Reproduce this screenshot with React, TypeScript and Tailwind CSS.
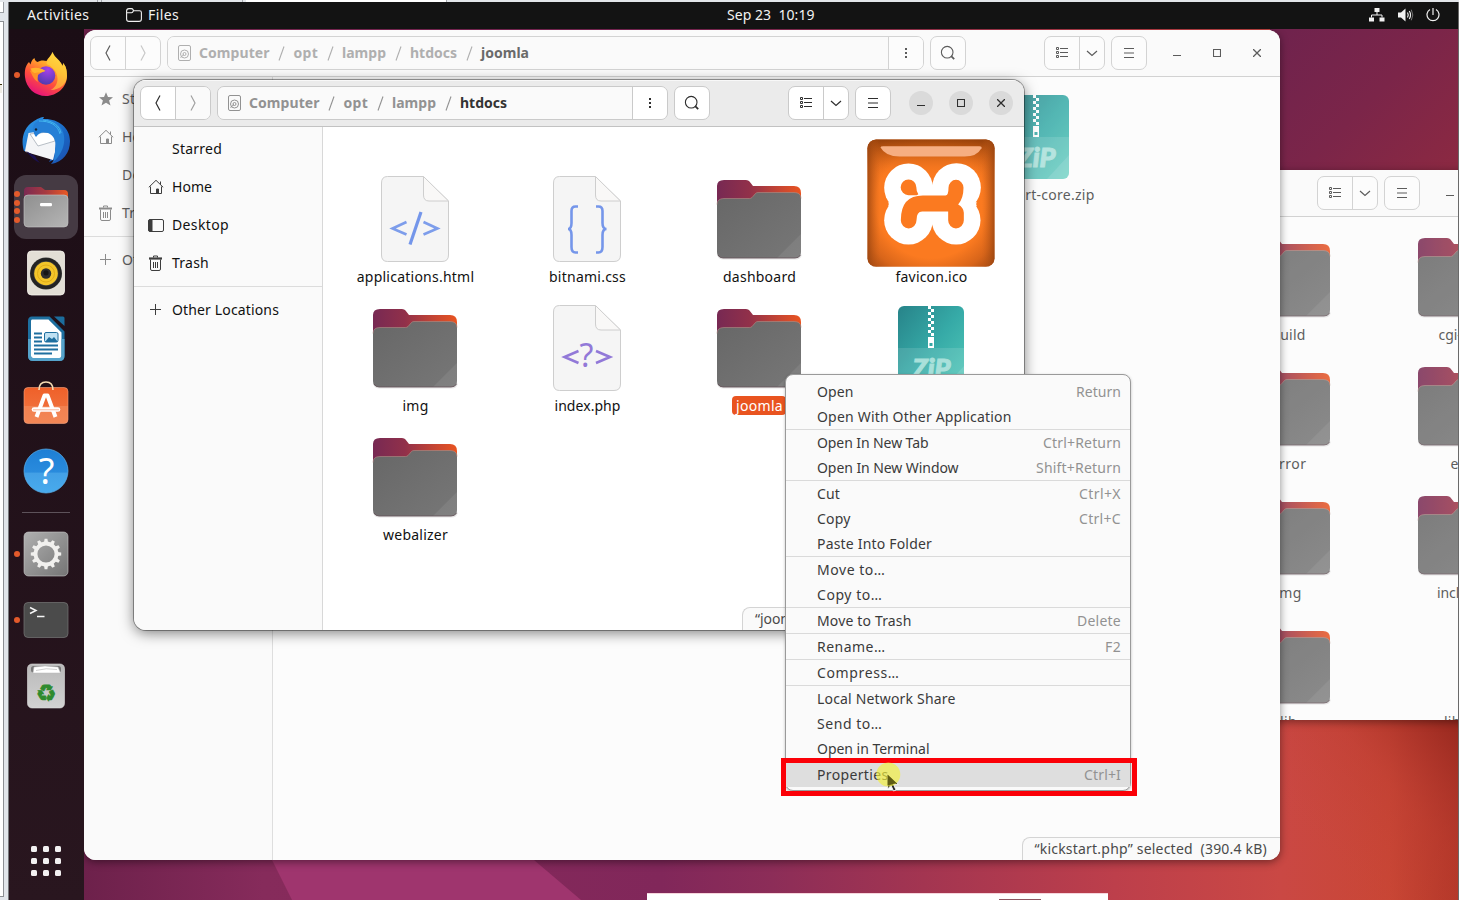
import { useLayoutEffect, useRef, type ReactNode } from "react";

/* Text run whose tracking is adjusted so that it occupies a given width. */
function T({ w, children, className = "" }: { w: number; children: string; className?: string }) {
  const ref = useRef<HTMLSpanElement>(null);
  useLayoutEffect(() => {
    const el = ref.current;
    if (!el) return;
    el.style.letterSpacing = "0px";
    const natural = el.getBoundingClientRect().width;
    el.style.letterSpacing = `${(w - natural) / children.length}px`;
  }, [w, children]);
  return (
    <span ref={ref} className={`inline-block whitespace-pre ${className}`}>
      {children}
    </span>
  );
}

/* ---------- small symbolic icons ---------- */

const Back = () => (
  <svg width="16" height="18" viewBox="0 0 16 18" fill="none" stroke="currentColor" strokeWidth="1.2">
    <path d="M10 1.5 6 9l4 7.5" />
  </svg>
);
const Forward = () => (
  <svg width="16" height="18" viewBox="0 0 16 18" fill="none" stroke="currentColor" strokeWidth="1.2">
    <path d="M6 1.5 10 9l-4 7.5" />
  </svg>
);
const Disk = () => (
  <svg width="13" height="16" viewBox="0 0 13 16" fill="none" stroke="currentColor">
    <rect x=".5" y=".5" width="12" height="15" rx="1.5" />
    <circle cx="6.5" cy="9" r="4" />
    <circle cx="6.5" cy="9" r="1.5" />
    <path d="M2.5 12.5 6 9.5" />
  </svg>
);
const Kebab = () => (
  <svg width="4" height="12" viewBox="0 0 4 12" fill="currentColor">
    <rect x="1" y="1" width="2" height="2" />
    <rect x="1" y="5" width="2" height="2" />
    <rect x="1" y="9" width="2" height="2" />
  </svg>
);
const Search = () => (
  <svg width="16" height="16" viewBox="0 0 16 16" fill="none" stroke="currentColor" strokeWidth="1.1">
    <circle cx="7.2" cy="7.2" r="5.8" />
    <path d="m11.2 11.2 3 3" strokeWidth="1.8" />
  </svg>
);
const ListView = () => (
  <svg width="14" height="12" viewBox="0 0 14 12" fill="none" stroke="currentColor">
    <path d="M1.500 .5h2v2h-2zM1.500 4.500h2v2h-2zM1.500 8.500h2v2h-2z" />
    <path d="M5 1.500h8M5 5.500h8M5 9.500h8" />
  </svg>
);
const Chevron = () => (
  <svg width="12" height="7" viewBox="0 0 12 7" fill="none" stroke="currentColor" strokeWidth="1.2">
    <path d="m1 1 5 4.5L11 1" />
  </svg>
);
const Burger = () => (
  <svg width="10" height="11" viewBox="0 0 10 11" fill="none" stroke="currentColor">
    <path d="M0 .5h10M0 5h10M0 9.500h10" />
  </svg>
);
const Star = () => (
  <svg width="16" height="16" viewBox="0 0 16 16" fill="currentColor">
    <path d="m8 1.2 2 4.8 5 .3-3.900 3.200 1.400 5L8 11.700l-4.500 2.800 1.400-5L1 6.300 6 6z" />
  </svg>
);
const Home = () => (
  <svg width="16" height="16" viewBox="0 0 16 16" fill="none" stroke="currentColor">
    <path d="M.8 8.300 8 1.300l7.200 7M2.500 7.500v7h11v-7M12.500 2.500v3" />
    <path d="M8.500 10h2v4.500h-2z" fill="currentColor" />
  </svg>
);
const Desktop = () => (
  <svg width="16" height="16" viewBox="0 0 16 16" fill="none" stroke="currentColor">
    <rect x=".5" y="2.500" width="15" height="12" rx="1.500" />
    <path d="M1 3h3v11H1z" fill="currentColor" />
  </svg>
);
const Trash = () => (
  <svg width="16" height="16" viewBox="0 0 16 16" fill="none" stroke="currentColor">
    <path d="M2.500 4.500v9.500q0 1.500 1.500 1.500h7q1.500 0 1.500-1.500V4.500M5.500 7v6M7.500 7v6M9.500 7v6" />
    <path d="M1 3.500h13" strokeWidth="2.200" />
    <path d="M5.500 2.500V1h4v1.500" />
  </svg>
);
const Plus = () => (
  <svg width="16" height="16" viewBox="0 0 16 16" fill="none" stroke="currentColor">
    <path d="M2 7.500h11M7.500 2v11" />
  </svg>
);
const Blank = () => <span className="w-4" />;

/* ---------- file icons ---------- */

function FolderIcon() {
  return (
    <svg width="96" height="96" viewBox="0 0 96 96">
      <defs>
        <linearGradient id="fb" x1="0" y1="0" x2="1" y2="0">
          <stop offset="0" stopColor="#772953" />
          <stop offset=".38" stopColor="#91304a" />
          <stop offset=".75" stopColor="#c84632" />
          <stop offset="1" stopColor="#e95420" />
        </linearGradient>
        <linearGradient id="ff" x1="0" y1="0" x2="1" y2="1">
          <stop offset="0" stopColor="#676767" />
          <stop offset="1" stopColor="#777" />
        </linearGradient>
      </defs>
      <rect x="6.500" y="80" width="84" height="8.500" rx="6" fill="#000" opacity=".1" />
      <path d="M6 15q0-6 7-6h22q2.500 0 3.500 1.500L42 15h41q7 0 7 7v30H6z" fill="url(#fb)" />
      <path d="M6 33.500q0-6 7-6h25.500q1.500 0 2.500-1l3.500-4q1-1 2.500-1h36q7 0 7 6V81q0 6-6 6H12q-6 0-6-6z" fill="url(#ff)" />
      <path d="M6 33.500q0-6 7-6h25.500q1.500 0 2.500-1l3.500-4q1-1 2.500-1h36q7 0 7 6" fill="none" stroke="#b08d84" strokeWidth=".6" />
      <path d="M90 63v18q0 6-6 6H66z" fill="#fff" opacity=".08" />
      <path d="M7 84q2 3 5 3h72q4 0 5.500-3" fill="none" stroke="#655058" strokeWidth=".8" />
    </svg>
  );
}

function DocIcon({ kind }: { kind: "html" | "css" | "php" }) {
  return (
    <svg width="96" height="96" viewBox="0 0 96 96" fill="none">
      <path d="M20.500 5.500H56L81.500 30v54q0 6.500-6.500 6.500H20.500q-6 0-6-6.500V12q0-6.500 6-6.500z" fill="#f5f5f5" stroke="#cecece" />
      <path d="M56.500 5.500 81.500 30H62q-5.500 0-5.500-6z" fill="#f9f8f7" stroke="#cecece" />
      {kind === "html" && (
        <g stroke="#7d9deb" strokeWidth="2.600">
          <path d="M39.500 51 25.500 57.500 39.500 63.500M56.500 51l14 6.500-14 6" />
          <path d="M54 41 43 73.500" stroke="#7496ea" strokeWidth="3.200" />
        </g>
      )}
      {kind === "css" && (
        <g stroke="#7596ea" strokeWidth="2.600">
          <path d="M39 35.500h-2.500q-4 0-4 4.500v12q0 6-3.500 6 3.500 0 3.500 6v12q0 5.500 4 5.500H39" />
          <path d="M57 35.500h2.500q4 0 4 4.500v12q0 6 4 6-4 0-4 6v12q0 5.500-4 5.500H57" />
        </g>
      )}
      {kind === "php" && (
        <>
          <path d="M39.500 51 25.500 57 39.500 63M57 51l14 6-14 6" stroke="#9279d8" strokeWidth="2.600" />
          <text x="47.500" y="67" textAnchor="middle" fontFamily="Noto Sans, sans-serif" fontSize="32" fill="#9279d8">?</text>
        </>
      )}
    </svg>
  );
}

function ZipIcon() {
  return (
    <svg width="96" height="96" viewBox="0 0 96 96">
      <defs>
        <linearGradient id="zg" x1="0" y1="0" x2="1" y2="1">
          <stop offset="0" stopColor="#278389" />
          <stop offset=".5" stopColor="#36aaa7" />
          <stop offset="1" stopColor="#52c9b9" />
        </linearGradient>
      </defs>
      <rect x="15" y="6" width="66" height="84" rx="6" fill="url(#zg)" />
      <path d="M15 48h66v36q0 6-6 6H21q-6 0-6-6z" fill="#fff" opacity=".12" />
      <path d="M81 66v18q0 6-6 6H59z" fill="#fff" opacity=".12" />
      {[0, 1, 2, 3, 4, 5, 6, 7, 8, 9].map((i) => (
        <rect key={i} x={i % 2 ? 48 : 45} y={6 + i * 3} width="3" height="3" fill="#fff" />
      ))}
      <path d="M45 37h6v11h-6zM46.500 43v3h3v-3z" fill="#fff" fillRule="evenodd" />
      <text x="29.500" y="78" textLength="38" lengthAdjust="spacingAndGlyphs" fontFamily="Lato, sans-serif" fontWeight="900" fontStyle="italic" fontSize="26" fill="#a9e0da" stroke="#a9e0da" strokeWidth="1">ZiP</text>
    </svg>
  );
}

function XamppIcon() {
  return (
    <svg width="128" height="128" viewBox="981.500 188.500 384 384">
      <defs>
        <radialGradient id="xg" cx=".5" cy=".5" r=".72">
          <stop offset=".6" stopColor="#fb7a20" />
          <stop offset=".8" stopColor="#d8651a" />
          <stop offset="1" stopColor="#9a4310" />
        </radialGradient>
        <linearGradient id="xt" x1="0" y1="0" x2="0" y2="1">
          <stop offset="0" stopColor="#8e3c08" stopOpacity=".85" />
          <stop offset=".14" stopColor="#bb5612" stopOpacity=".45" />
          <stop offset=".3" stopColor="#fb7a20" stopOpacity="0" />
        </linearGradient>
        <linearGradient id="xs" x1="0" y1="0" x2="1" y2="0">
          <stop offset="0" stopColor="#9a4510" stopOpacity=".8" />
          <stop offset=".1" stopColor="#c85f18" stopOpacity="0" />
          <stop offset=".9" stopColor="#c85f18" stopOpacity="0" />
          <stop offset="1" stopColor="#9a4510" stopOpacity=".8" />
        </linearGradient>
      </defs>
      <rect x="983" y="190" width="381" height="382" rx="26" fill="url(#xg)" />
      <rect x="983" y="190" width="381" height="382" rx="26" fill="url(#xt)" />
      <rect x="983" y="190" width="381" height="382" rx="26" fill="url(#xs)" />
      <path d="M1022 214q0-4 8-4h289q8 0 6 6-14 25-50 25h-196q-42 0-57-27z" fill="#f6ae82" />
      <g fill="#fff">
        <circle cx="1106" cy="335" r="73" />
        <circle cx="1250" cy="334" r="73" />
        <circle cx="1106" cy="432" r="73" />
        <circle cx="1249" cy="432" r="73" />
        <path d="M1045 378q4 5 0 12l60 5v-20zM1311 378q-4 5 0 12l-60 5v-20zM1100 325h155v120h-155z" />
      </g>
      <path d="M1131 357h-25a23.500 23.500 0 1 1 23.500-23.500q0 14 6 21z" fill="#fb7a20" />
      <path d="M1083 432q0-74 66-74h68q9 0 9-23a22.500 24 0 0 1 45 0q0 32-16 50 16 8 17 25v22a23.500 25 0 0 1-47 0v-26h-78q-17 0-17 26a23.500 25 0 0 1-47 0z" fill="#fb7a20" />
    </svg>
  );
}

/* ---------- window parts ---------- */

type Crumb = { label: string; w: number };

function HeaderBar({ crumbs, active }: { crumbs: Crumb[]; active: boolean }) {
  const btn = active ? "border-[#cacaca] bg-white" : "border-[#d3d3d3] bg-[#fcfcfc]";
  const line = active ? "border-[#cacaca]" : "border-[#d3d3d3]";
  const ctl = `flex h-6 w-6 items-center justify-center rounded-full ${active ? "bg-[#dadada]" : ""}`;
  return (
    <div
      className={`flex h-[47px] shrink-0 items-center border-b pr-[11px] pl-1.5 ${
        active ? "border-[#c2c2c2] bg-[#ebebeb] text-[#2e2e2e] shadow-[inset_0_1px_0_#f8f8f8]" : "border-[#d2d2d2] bg-[#fafafa] text-[#5c5c5c]"
      }`}
    >
      <div className={`flex h-[34px] w-[71px] overflow-hidden rounded-[7px] border ${btn}`}>
        <span className={`flex w-[35px] items-center justify-center border-r ${line}`}><Back /></span>
        <span className={`flex flex-1 items-center justify-center ${active ? "bg-[#fafafa] text-[#a0a0a0]" : "text-[#c8c8c8]"}`}><Forward /></span>
      </div>
      <div className={`ml-1.5 flex h-[34px] flex-1 overflow-hidden rounded-[7px] border ${line}`}>
        <div className={`flex flex-1 items-center bg-[#fafafa] pl-2.5 font-bold ${active ? "text-[#929292]" : "text-[#afafaf]"}`}>
          <Disk />
          <span className="w-2" />
          {crumbs.map((c, i) => (
            <span key={c.label} className="flex items-center">
              {i > 0 && (
                <span className="flex w-6 justify-center">
                  <svg width="7" height="15" viewBox="0 0 7 15" stroke="currentColor" strokeWidth="1.100"><path d="M1 14.500 6 .500" /></svg>
                </span>
              )}
              <T w={c.w} className={`pb-px ${i === crumbs.length - 1 ? (active ? "text-[#333]" : "text-[#6a6a6a]") : ""}`}>{c.label}</T>
            </span>
          ))}
        </div>
        <span className={`flex w-[35px] items-center justify-center border-l ${line} ${active ? "bg-white" : "bg-[#fcfcfc]"}`}><Kebab /></span>
      </div>
      <div className={`ml-1.5 flex h-[34px] w-9 items-center justify-center rounded-[7px] border ${btn}`}><Search /></div>
      <div className={`ml-[78px] flex h-[34px] w-[61px] rounded-[7px] border ${btn}`}>
        <span className={`flex w-[35px] items-center justify-center border-r ${line}`}><ListView /></span>
        <span className="flex flex-1 items-center justify-center"><Chevron /></span>
      </div>
      <div className={`ml-1.5 flex h-[34px] w-9 items-center justify-center rounded-[7px] border ${btn}`}><Burger /></div>
      <div className="ml-[18px] flex gap-4">
        <span className={ctl}><svg width="8" height="8" viewBox="0 0 8 8"><path d="M0 6.500h8" stroke="currentColor" /></svg></span>
        <span className={ctl}><svg width="8" height="8" viewBox="0 0 8 8"><path d="M.5 .5h7v7h-7z" fill="none" stroke="currentColor" strokeWidth="1.100" /></svg></span>
        <span className={ctl}><svg width="8" height="8" viewBox="0 0 8 8"><path d="m0 0 8 8M8 0 0 8" stroke="currentColor" strokeWidth="1.300" /></svg></span>
      </div>
    </div>
  );
}

function Sidebar({ active }: { active: boolean }) {
  const row = "flex h-[38px] items-center gap-2 pl-3.5";
  const ic = active ? "text-[#3d3d3d]" : "text-[#8b8b8b]";
  return (
    <div className={`flex w-[189px] shrink-0 flex-col border-r pt-[3px] ${active ? "border-[#d8d8d8] bg-[#fafafa] text-[#111]" : "border-[#dedede] bg-[#fafafa] text-[#5e5e5e]"}`}>
      <div className={row}><span className={ic}>{active ? <span className="block w-4" /> : <Star />}</span><T w={50} className="pb-px">Starred</T></div>
      <div className={row}><span className={ic}><Home /></span><T w={40} className="pb-px">Home</T></div>
      <div className={row}>{active ? <span className={ic}><Desktop /></span> : <Blank />}<T w={57} className="pb-px">Desktop</T></div>
      <div className={row}><span className={ic}><Trash /></span><T w={37} className="pb-px">Trash</T></div>
      <div className="my-1 h-px shrink-0 bg-[#dcdcdc]" />
      <div className={row}><span className={ic}><Plus /></span><T w={107} className="pb-px">Other Locations</T></div>
    </div>
  );
}

function Item({ icon, label, w, selected }: { icon?: ReactNode; label: string; w: number; selected?: boolean }) {
  return (
    <div className="flex w-[172px] flex-col items-center justify-end">
      {icon ?? <div className="h-24" />}
      {selected ? (
        <span className="flex h-[19px] w-[54px] items-center justify-center rounded bg-[#e95420] pl-px text-white"><T w={w}>{label}</T></span>
      ) : (
        <span className="flex h-[19px] items-center pl-px"><T w={w}>{label}</T></span>
      )}
    </div>
  );
}

function Status({ text, w }: { text: string; w: number }) {
  return (
    <div className="absolute right-0 bottom-0 flex h-[23px] items-center rounded-tl-lg border-t border-l border-[#d4d4d4] bg-[#fafafa] px-3 pr-[13px] text-[#4a4a4a]">
      <T w={w} className="pb-px">{text}</T>
    </div>
  );
}

/* ---------- dock icons ---------- */

const Firefox = () => (
  <svg width="48" height="48" viewBox="0 0 48 48">
    <defs>
      <linearGradient id="fx" x1=".8" y1="0" x2=".3" y2="1">
        <stop offset="0" stopColor="#ffe14a" /><stop offset=".35" stopColor="#ffa32b" /><stop offset=".65" stopColor="#ff4f3c" /><stop offset="1" stopColor="#e4107e" />
      </linearGradient>
      <radialGradient id="fp" cx=".6" cy=".2" r=".9"><stop offset="0" stopColor="#a640ea" /><stop offset="1" stopColor="#453ba8" /></radialGradient>
    </defs>
    <path d="M30.500 1c-1 3.500-4.500 6-6 9-3-1-7-.5-9 1-2-1-3-2.500-3-4-2.500 1.500-3.500 4-4 6.500L7 11C3 15 2.500 20 3 26c1 11 10 19 21 19s21-9 21-20c0-6-1-10-4-13 0 1 0 2-.5 3-2-6-8-8-10-14z" fill="url(#fx)" />
    <path d="M30.500 1c-2 5-6 8-6 12 5 2 11 7 11 15 0 5-3 9-7 11 10 0 16.500-7 16.500-14 0-6-1-10-4-13 0 1 0 2-.5 3-2-6-8-8-10-14z" fill="#ffd83d" opacity=".6" />
    <circle cx="24" cy="24.500" r="9.300" fill="url(#fp)" />
    <path d="M8 20c5-3 11-3 15 0-3 1-5 2-7 4 0 2-1 4 0 7-5-3-6-8-8-11z" fill="#ff9128" />
    <path d="M8.500 17.500c5-1.500 10-1 15 2.500-4 2-8 1-10 2-3 0-4-2.500-5-4.500z" fill="#ffb42c" />
  </svg>
);
const Thunderbird = () => (
  <svg width="48" height="48" viewBox="0 0 48 48">
    <defs>
      <linearGradient id="tb" x1="0" y1="0" x2="1" y2="1"><stop offset="0" stopColor="#2f9bea" /><stop offset=".6" stopColor="#1967c4" /><stop offset="1" stopColor="#1d4fae" /></linearGradient>
    </defs>
    <path d="M12 4C17 1 19 0 22 0l-1 2c14-1 27 8 27 22 0 12-7 21-19 23l4-5-6 3 3-6L2 34C-1 25 0 11 12 4z" fill="url(#tb)" />
    <path d="M3 34 6.500 16l20-3 7.500 10-1 12-2 8L4 35z" fill="#f4f5f7" />
    <path d="M8 17 16 29l17-5-1-5-6-4z" fill="#fff" stroke="#9aa3ae" strokeWidth=".7" />
    <path d="M4 34q7 9 14 12-4-4-5-7z" fill="#1a1050" />
    <path d="M13 6C21 1 36 2 41 15c4 11-2 24-10 30 2-5 2-8 2-12 2-8-1-15-7-17-6-1-8-1-12 4-3-4-4-10-1-14z" fill="#257fd6" />
    <path d="M17 4c11 0 19 4 21 13M21 3c10 1 17 6 18 13" stroke="#43b6f0" strokeWidth="1" fill="none" />
    <circle cx="14" cy="12.500" r="1.200" fill="#123" />
  </svg>
);
const FilesApp = () => (
  <svg width="48" height="48" viewBox="0 0 48 48">
    <defs>
      <linearGradient id="fa" x1="0" y1="0" x2="1" y2="0"><stop offset="0" stopColor="#7b2a52" /><stop offset=".5" stopColor="#a83a40" /><stop offset="1" stopColor="#ea5a24" /></linearGradient>
      <linearGradient id="fc" x1="0" y1="0" x2="1" y2="1"><stop offset="0" stopColor="#8f8f8f" /><stop offset="1" stopColor="#b5b5b5" /></linearGradient>
    </defs>
    <path d="M2 8q0-4 4-4h13l4 3h19q4 0 4 4v12H2z" fill="url(#fa)" />
    <rect x="2" y="12" width="44" height="32" rx="4" fill="url(#fc)" stroke="#c6c6c6" strokeWidth=".6" />
    <rect x="18" y="20" width="12" height="3.300" rx="1.200" fill="#fff" />
  </svg>
);
const Rhythmbox = () => (
  <svg width="48" height="48" viewBox="0 0 48 48">
    <rect x="5.500" y="2" width="37" height="44" rx="4" fill="#e3dfd6" stroke="#f6f4ee" strokeWidth=".8" />
    <circle cx="24" cy="24.500" r="16" fill="#3d3d3d" />
    <circle cx="24" cy="24.500" r="14" fill="none" stroke="#232323" strokeWidth="3" />
    <circle cx="24" cy="24.500" r="11.800" fill="#f3c52a" />
    <circle cx="24" cy="24.500" r="8.500" fill="none" stroke="#e0ad17" />
    <circle cx="24" cy="24.500" r="5.200" fill="#2e2e2e" />
    <circle cx="24" cy="23.800" r="2.600" fill="#161616" />
  </svg>
);
const Writer = () => (
  <svg width="48" height="48" viewBox="0 0 48 48">
    <path d="M10 3h17l14 14v24q0 3.500-3.500 3.500H11q-3.500 0-3.500-3.500V6q0-3 2.500-3z" fill="#fff" stroke="#1d6f9f" strokeWidth="3" />
    <path d="M7.500 24v17q0 3.500 3.500 3.500h26.500q3.500 0 3.500-3.500V24" fill="none" stroke="#55a3cb" strokeWidth="3" />
    <path d="M32 1.500h9q1.500 0 1.500 1.500v8z" fill="#1c6d9d" />
    <path d="M12 18.500h8M12 22.500h8M12 26.500h8M12 30.500h24M12 34.500h24M12 38.500h18" stroke="#1f6f9f" strokeWidth="2" />
    <rect x="22.500" y="17.500" width="13.500" height="9.500" rx="1.500" fill="#bfe1f3" stroke="#1f6f9f" />
    <path d="m23 27 4-5 3 2 2-2 4 5z" fill="#1f6f9f" />
  </svg>
);
const Software = () => (
  <svg width="48" height="48" viewBox="0 0 48 48">
    <defs><linearGradient id="sw" x1="0" y1="0" x2="0" y2="1"><stop offset="0" stopColor="#ef6029" /><stop offset=".5" stopColor="#f06d38" /><stop offset=".51" stopColor="#f28150" /><stop offset="1" stopColor="#f28756" /></linearGradient></defs>
    <rect x="2" y="6.500" width="44" height="36" rx="4" fill="url(#sw)" stroke="#f7a27e" strokeWidth=".6" />
    <path d="M17 9q0-8 7-8t7 8" fill="none" stroke="#f6dcb4" strokeWidth="1.600" />
    <path d="M14.500 36 22.500 14.500h3L33.500 36" fill="none" stroke="#fff" strokeWidth="4" strokeLinejoin="round" />
    <path d="M12 28.500h24" stroke="#fff" strokeWidth="4.600" strokeLinecap="round" />
    <path d="M11 28.800h26" stroke="#f6b193" strokeWidth=".9" />
  </svg>
);
const Help = () => (
  <svg width="48" height="48" viewBox="0 0 48 48">
    <defs><linearGradient id="hp" x1="0" y1="0" x2="0" y2="1"><stop offset="0" stopColor="#1e7fd5" /><stop offset=".53" stopColor="#298bdd" /><stop offset=".54" stopColor="#43a0e6" /><stop offset="1" stopColor="#48abed" /></linearGradient></defs>
    <circle cx="24" cy="24" r="22" fill="url(#hp)" stroke="#5ab2ee" strokeWidth=".7" />
    <text x="24.500" y="37" textAnchor="middle" fontFamily="Noto Sans, sans-serif" fontSize="36" fill="#fff">?</text>
  </svg>
);
const Settings = () => (
  <svg width="48" height="48" viewBox="0 0 48 48">
    <defs><linearGradient id="st" x1="0" y1="0" x2="1" y2="1"><stop offset="0" stopColor="#b0b0b0" /><stop offset="1" stopColor="#757575" /></linearGradient></defs>
    <rect x="2" y="2" width="44" height="44" rx="4.500" fill="url(#st)" stroke="#c9c9c9" strokeWidth=".6" />
    <circle cx="24" cy="24" r="10.500" fill="none" stroke="#f1f0ee" strokeWidth="3.800" />
    {[0, 30, 60, 90, 120, 150, 180, 210, 240, 270, 300, 330].map((a) => (
      <path key={a} d="m22 12.500.600-3.700h2.800l.600 3.700z" fill="#f1f0ee" transform={`rotate(${a} 24 24)`} />
    ))}
  </svg>
);
const Terminal = () => (
  <svg width="48" height="48" viewBox="0 0 48 48">
    <rect x="2" y="6.500" width="44" height="35" rx="4" fill="#4b4b4b" stroke="#777" strokeWidth=".7" />
    <path d="m8 11.500 6 3-6 3M15 20.500h7.500" fill="none" stroke="#f5f5f5" strokeWidth="1.500" />
  </svg>
);
const TrashApp = () => (
  <svg width="48" height="48" viewBox="0 0 48 48">
    <defs><linearGradient id="tr" x1="0" y1="0" x2="0" y2="1"><stop offset="0" stopColor="#b9b9b9" /><stop offset="1" stopColor="#d2d2d2" /></linearGradient></defs>
    <rect x="5.500" y="2" width="37" height="44" rx="4.500" fill="url(#tr)" stroke="#dedede" strokeWidth=".6" />
    <rect x="9" y="4" width="30" height="6.500" rx="2.500" fill="#777" />
    <path d="m11 11 1-6 11-1 13 1 2.500 6z" fill="#fff" stroke="#bbb" strokeWidth=".5" />
    <path d="M14 8.500q10-3 21-1" fill="none" stroke="#bbb" strokeWidth=".7" />
    <text x="24" y="38.500" textAnchor="middle" fontFamily="DejaVu Sans, sans-serif" fontSize="23" fill="#2e8b2e" stroke="#2e8b2e" strokeWidth=".8">♻</text>
  </svg>
);

function DockItem({ icon, dots = 0, active }: { icon: ReactNode; dots?: number; active?: boolean }) {
  return (
    <div className={`relative flex h-16 w-16 items-center justify-center rounded-[12px] ${active ? "bg-[#453a43]" : ""}`}>
      {icon}
      {dots > 0 && (
        <div className="absolute inset-y-0 left-0 flex flex-col justify-center gap-[2.700px]">
          {Array.from({ length: dots }, (_, i) => (
            <span key={i} className="h-1.5 w-1.5 rounded-full bg-[#e35a2b]" />
          ))}
        </div>
      )}
    </div>
  );
}

/* ---------- context menu ---------- */

type Entry = [label: string, w: number, key?: string, keyW?: number];
const MENU: Entry[][] = [
  [["Open", 36.5, "Return", 45], ["Open With Other Application", 194.5]],
  [["Open In New Tab", 111.5, "Ctrl+Return", 78], ["Open In New Window", 141.5, "Shift+Return", 85]],
  [["Cut", 23, "Ctrl+X", 42], ["Copy", 33.5, "Ctrl+C", 42], ["Paste Into Folder", 115]],
  [["Move to…", 68.5], ["Copy to…", 65.5]],
  [["Move to Trash", 94.5, "Delete", 44]],
  [["Rename…", 68.5, "F2", 16]],
  [["Compress…", 82.5]],
  [["Local Network Share", 138.5], ["Send to…", 65.5], ["Open in Terminal", 112.5]],
  [["Properties", 71.5, "Ctrl+I", 37]],
];

function ContextMenu() {
  return (
    <div className="absolute top-[374px] left-[785px] w-[346px] rounded-lg border border-[#9a9a9a] bg-[#fafafa] pt-1 pb-[3px] text-[#3a3a3a] shadow-[0_1px_3px_rgba(0,0,0,0.25)]">
      {MENU.map((group, g) => (
        <div key={g} className={g > 0 ? "border-t border-[#dadada]" : ""}>
          {group.map(([label, w, key, keyW]) => (
            <div key={label} className={`flex h-[25px] items-center justify-between pr-[9px] pl-[31px] ${label === "Properties" ? "bg-[#dedede]" : ""}`}>
              <T w={w}>{label}</T>
              {key && <T w={keyW ?? 40} className="text-[#929292]">{key}</T>}
            </div>
          ))}
        </div>
      ))}
    </div>
  );
}

/* ---------- desktop ---------- */

function Wallpaper() {
  return (
    <svg className="absolute inset-0" width="1459" height="900" viewBox="0 0 1459 900">
      <defs>
        <linearGradient id="w1" gradientUnits="userSpaceOnUse" x1="84" y1="0" x2="1459" y2="0">
          <stop offset="0" stopColor="#6d214b" /><stop offset=".13" stopColor="#862b5b" /><stop offset=".42" stopColor="#81275a" />
          <stop offset=".5" stopColor="#8c2d58" /><stop offset=".61" stopColor="#a33551" /><stop offset=".75" stopColor="#bd3f4b" />
          <stop offset=".87" stopColor="#ca4844" /><stop offset=".95" stopColor="#c94634" /><stop offset="1" stopColor="#b23625" />
        </linearGradient>
        <linearGradient id="w2" gradientUnits="userSpaceOnUse" x1="1290" y1="30" x2="1440" y2="180">
          <stop offset="0" stopColor="#70234d" /><stop offset=".5" stopColor="#7b2549" /><stop offset="1" stopColor="#8b2942" />
        </linearGradient>
        <linearGradient id="w3" gradientUnits="userSpaceOnUse" x1="1300" y1="860" x2="1459" y2="720">
          <stop offset="0" stopColor="#cc4a40" stopOpacity="0" /><stop offset=".55" stopColor="#b93b33" stopOpacity=".35" /><stop offset="1" stopColor="#97281e" />
        </linearGradient>
      </defs>
      <rect width="1459" height="900" fill="url(#w1)" />
      <path d="M272 860h262l47 40H292z" fill="#9f356e" />
      <rect x="1270" y="29" width="189" height="150" fill="url(#w2)" />
      <rect x="1270" y="715" width="189" height="185" fill="url(#w3)" />
    </svg>
  );
}

export default function App() {
  return (
    <div className="relative h-[900px] w-[1459px] overflow-hidden bg-[#e3e6ea] font-['Noto_Sans',sans-serif] text-[14px] leading-[19px]">
      <Wallpaper />

      {/* third window, mostly behind the others */}
      <div className="absolute top-[170px] left-[663px] flex h-[550px] w-[890px] flex-col overflow-hidden rounded-xl bg-[#fcfcfc] shadow-[0_2px_8px_rgba(0,0,0,0.4)]">
        <HeaderBar active={false} crumbs={[{ label: "lampp", w: 44 }]} />
        <div className="flex min-h-0 flex-1">
          <div className="w-[189px] shrink-0 border-r border-[#dedede]" />
          <div className="ml-1.5 flex flex-col gap-3.5 pt-3 pl-[344px] text-[#5e5e5e]">
            {([["build", 34, "cgi-bin", 44], ["error", 36, "etc", 20], ["img", 26, "include", 47], ["lib", 17, "lib64", 33]] as const).map(([a, aw, b, bw], i) => (
              <div key={a} className="flex">
                <Item icon={<div className="opacity-85"><FolderIcon /></div>} label={a} w={aw} />
                <Item icon={i < 3 ? <div className="opacity-85"><FolderIcon /></div> : undefined} label={b} w={bw} />
              </div>
            ))}
          </div>
        </div>
      </div>

      {/* joomla window */}
      <div className="absolute top-[30px] left-[84px] flex h-[830px] w-[1196px] flex-col overflow-hidden rounded-xl bg-[#fcfcfc] shadow-[0_2px_8px_rgba(0,0,0,0.45)]">
        <HeaderBar
          active={false}
          crumbs={[{ label: "Computer", w: 70.5 }, { label: "opt", w: 24.5 }, { label: "lampp", w: 44 }, { label: "htdocs", w: 47 }, { label: "joomla", w: 48 }]}
        />
        <div className="flex min-h-0 flex-1">
          <Sidebar active={false} />
          <div className="flex flex-1 items-start pt-3 pl-[677px] text-[#5e5e5e]">
            <Item icon={<div className="opacity-85"><ZipIcon /></div>} label="kickstart-core.zip" w={116} />
          </div>
        </div>
        <Status text="“kickstart.php” selected  (390.4 kB)" w={232.5} />
      </div>

      {/* top bar */}
      <div className="absolute top-0 left-0 flex h-[2px] w-full bg-[#e3e6ea]">
        <span className="ml-[97px] w-px bg-[#a5a8ad]" />
        <span className="ml-[3px] w-px bg-[#a5a8ad]" />
        <span className="ml-[140px] w-px bg-[#a5a8ad]" />
        <span className="ml-[3px] w-[201px] border-r border-[#a5a8ad] bg-white" />
      </div>
      <div className="absolute top-[2px] left-[9px] flex h-[27px] w-[1449px] items-center bg-[#131313] pb-0.5 text-[#f2f2f2]">
        <div className="flex w-[718px] items-center pl-[18px]">
          <T w={62.5}>Activities</T>
          <svg className="mr-1.5 ml-[36.500px]" width="16" height="14" viewBox="0 0 16 14" fill="none" stroke="currentColor" strokeWidth="1.100">
            <path d="M.6 11V3Q.6.600 3 .600h2.500q1 0 1.500 1l.500 1.100h6q1.900 0 1.900 1.900V11q0 2.400-2.400 2.400H3Q.6 13.400.6 11zM.6 4.700h5q1 0 1.900-2" />
          </svg>
          <T w={31}>Files</T>
        </div>
        <T w={87.5}>Sep 23  10:19</T>
        <div className="mr-[18px] ml-auto flex items-center gap-[12.500px]">
          <svg width="16" height="14" viewBox="0 0 16 14" fill="currentColor">
            <path d="M5.500 0h5v4h-5zM0 9.500h5v4H0zM10.500 9.500h5v4h-5z" />
            <path d="M8 4v3M2.500 9.500V7h10.500v2.500" fill="none" stroke="currentColor" />
          </svg>
          <svg width="16" height="14" viewBox="0 0 16 14" fill="currentColor">
            <path d="M0 4.500h3L7.500.500v13L3 9.500H0z" />
            <path d="M9.500 4.500q1.500 2.500 0 5M11.300 3q2.500 4 0 8" fill="none" stroke="currentColor" strokeWidth="1.200" />
            <path d="M13.300 1.700q3 5.300 0 10.600" fill="none" stroke="#777" />
          </svg>
          <svg width="14" height="14" viewBox="0 0 14 14" fill="none" stroke="currentColor" strokeWidth="1.200">
            <path d="M7 0v7M4 1.500a6 6 0 1 0 6 0" />
          </svg>
        </div>
      </div>

      {/* dock */}
      <div className="absolute top-[29px] left-[9px] flex h-[871px] w-[75px] flex-col items-center bg-linear-to-b from-[#1b0d15] to-[#29161f] pt-3.5 pr-px">
        <div className="flex flex-col gap-0.5">
          <DockItem icon={<Firefox />} dots={1} />
          <DockItem icon={<Thunderbird />} />
          <DockItem icon={<FilesApp />} dots={4} active />
          <DockItem icon={<Rhythmbox />} />
          <DockItem icon={<Writer />} />
          <DockItem icon={<Software />} />
          <DockItem icon={<Help />} />
        </div>
        <div className="mt-[9px] mb-[9px] h-px w-12 shrink-0 bg-[#5d525a]" />
        <div className="flex flex-col gap-0.5">
          <DockItem icon={<Settings />} dots={1} />
          <DockItem icon={<Terminal />} dots={1} />
          <DockItem icon={<TrashApp />} />
        </div>
        <div className="mt-auto mb-6 grid grid-cols-3 gap-1.5">
          {Array.from({ length: 9 }, (_, i) => (
            <span key={i} className="h-1.5 w-1.5 rounded-[1.500px] bg-[#f2f0f1]" />
          ))}
        </div>
      </div>

      {/* htdocs window */}
      <div className="absolute top-[80px] left-[134px] flex h-[550px] w-[890px] flex-col overflow-hidden rounded-xl bg-white shadow-[0_0_0_1px_rgba(0,0,0,0.35),0_3px_14px_rgba(0,0,0,0.5)]">
        <HeaderBar active crumbs={[{ label: "Computer", w: 70.5 }, { label: "opt", w: 24.5 }, { label: "lampp", w: 44 }, { label: "htdocs", w: 47 }]} />
        <div className="flex min-h-0 flex-1">
          <Sidebar active />
          <div className="flex flex-col gap-3.5 pt-3 pl-1.5 text-[#111]">
            <div className="flex">
              <Item icon={<DocIcon kind="html" />} label="applications.html" w={117.5} />
              <Item icon={<DocIcon kind="css" />} label="bitnami.css" w={77} />
              <Item icon={<FolderIcon />} label="dashboard" w={73} />
              <Item icon={<XamppIcon />} label="favicon.ico" w={72} />
            </div>
            <div className="flex">
              <Item icon={<FolderIcon />} label="img" w={26} />
              <Item icon={<DocIcon kind="php" />} label="index.php" w={66} />
              <Item icon={<FolderIcon />} label="joomla" w={47} selected />
              <Item icon={<ZipIcon />} label="joomla.zip" w={68} />
            </div>
            <div className="flex">
              <Item icon={<FolderIcon />} label="webalizer" w={65} />
            </div>
          </div>
        </div>
        <Status text="“joomla” selected  (containing 27 items)" w={256} />
      </div>

      <ContextMenu />

      {/* highlight frame and pointer */}
      <div className="absolute top-[758px] left-[781px] h-[38px] w-[356px] border-[5px] border-[#fb0007]" />
      <svg className="absolute top-[760px] left-[874px]" width="30" height="32" viewBox="0 0 30 32">
        <path d="M13.500 14v15l3.500-3.500 2.500 5.500 2.500-1-2.500-5.500h5z" fill="#262626" stroke="#f4f4f4" strokeWidth=".9" />
        <circle cx="14.300" cy="14.500" r="12" fill="#f3f03a" fillOpacity=".66" />
        <path d="M13.500 14.500v11l9-2.500z" fill="#5f5c14" />
      </svg>

      {/* host window edges */}
      <div className="absolute top-[2px] left-0 flex h-[898px] w-[9px] flex-col border-r border-[#77797d] bg-[#e1e5ea]">
        <div className="h-[11px] w-1 border-r border-b border-[#9a9da2] bg-white" />
        <div className="mt-2 h-[876px] w-1 border-t border-r border-b border-[#8c8f94] bg-white pt-[62px]">
          <div className="h-px w-[2px] bg-[#3a3108]" />
          <div className="h-2 w-[2px] bg-[#f0eee6]" />
        </div>
      </div>
      <div className="absolute top-[2px] right-0 h-[898px] w-px bg-[#6a6a6a]" />
      <div className="absolute top-[893px] left-[647px] h-[7px] w-[461px] border-t border-[#f6d5dc] bg-white pl-[352px]">
        <div className="mt-[5px] h-px w-[42px] bg-[#8d5560]" />
      </div>
    </div>
  );
}
